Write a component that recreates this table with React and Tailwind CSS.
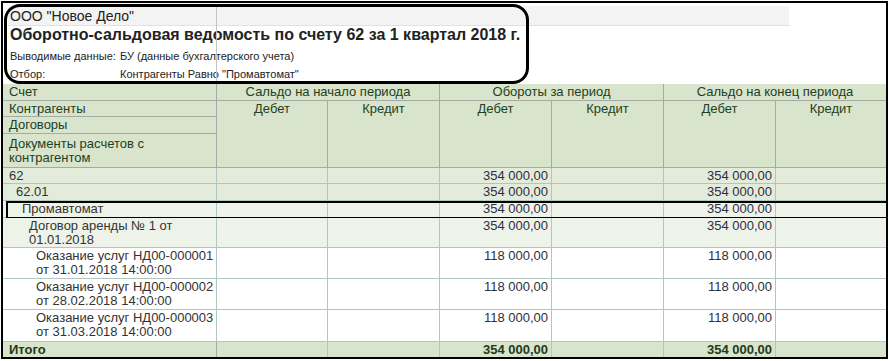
const COLS = "grid grid-cols-[214px_111px_112px_112px_112px_112px_111px]";

const rows = [
  { label: ["62"], pl: "pl-[6px]", bg: "bg-[#e3ecda]", h: "h-[16px]", turn: "354 000,00", end: "354 000,00" },
  { label: ["62.01"], pl: "pl-[13px]", bg: "bg-[#e3ecda]", h: "h-[17px]", turn: "354 000,00", end: "354 000,00" },
  { label: ["Промавтомат"], pl: "pl-[19px]", bg: "bg-[#eef3e9]", h: "h-[17px]", turn: "354 000,00", end: "354 000,00", marked: true },
  { label: ["Договор аренды № 1 от", "01.01.2018"], pl: "pl-[26px]", bg: "bg-[#eef3e9]", h: "h-[30px]", turn: "354 000,00", end: "354 000,00" },
  { label: ["Оказание услуг НД00-000001", "от 31.01.2018 14:00:00"], pl: "pl-[33px]", bg: "bg-white", h: "h-[31px]", turn: "118 000,00", end: "118 000,00" },
  { label: ["Оказание услуг НД00-000002", "от 28.02.2018 14:00:00"], pl: "pl-[33px]", bg: "bg-white", h: "h-[31px]", turn: "118 000,00", end: "118 000,00" },
  { label: ["Оказание услуг НД00-000003", "от 31.03.2018 14:00:00"], pl: "pl-[33px]", bg: "bg-white", h: "h-[32px]", turn: "118 000,00", end: "118 000,00" },
];

function HeadGroup({ title }) {
  return <div className="col-span-2 border-r border-b border-[#a4aaa4] text-center pt-px">{title}</div>;
}

function SubCell({ text }) {
  return <div className="row-span-3 border-r border-b border-[#a4aaa4] text-center pt-px">{text}</div>;
}

function NumCell({ value, bold }) {
  return (
    <div className={`border-r border-b border-[#b0c7bf] text-right pr-[3px] pt-px ${bold ? "font-bold text-[#1d3a1d]" : "text-[#2e2e3e]"}`}>
      {value}
    </div>
  );
}

export default function App() {
  return (
    <div className="w-[889px] h-[361px] bg-white font-['Liberation_Sans',Arial,sans-serif] text-[13px] leading-[14px] text-[#333]">
      <div className="ml-px mt-px w-[887px] h-[358px] border-2 border-black overflow-hidden">
        {/* report header */}
        <div className="relative h-[81px]">
          <div className="absolute left-[213px] top-[3px] bottom-0 w-px bg-[#c4c4c4]" />
          <div className="pt-[3px] pl-[5px]">
            <div className="w-[781px] h-[20px] bg-[#f3f3f3] border-b border-[#e2e2e2] pl-[2px] text-[14px] leading-[20px] text-[#222]">
              ООО "Новое Дело"
            </div>
          </div>
          <div className="h-[18px] pl-[7px] text-[16px] leading-[18px] font-bold text-[#222] whitespace-nowrap">
            Оборотно-сальдовая ведомость по счету 62 за 1 квартал 2018 г.
          </div>
          <div className="flex h-[23px] pt-[5px] pl-[7px] text-[11px] leading-[14px] text-[#222] whitespace-nowrap">
            <span className="w-[110px]">Выводимые данные:</span>
            <span>БУ (данные бухгалтерского учета)</span>
          </div>
          <div className="flex h-[14px] pl-[7px] text-[11px] leading-[14px] text-[#222] whitespace-nowrap">
            <span className="w-[110px]">Отбор:</span>
            <span>Контрагенты Равно "Промавтомат"</span>
          </div>
          <div className="absolute left-px top-px w-[525px] h-[80px] border-[3px] border-black rounded-[16px]" />
        </div>

        {/* table header */}
        <div className={`${COLS} grid-rows-[17px_16px_17px_34px] bg-[#d8e4cc] text-[#233f23]`}>
          <div className="border-r border-b border-[#a4aaa4] pl-[6px] pt-px">Счет</div>
          <HeadGroup title="Сальдо на начало периода" />
          <HeadGroup title="Обороты за период" />
          <HeadGroup title="Сальдо на конец периода" />
          <div className="border-r border-b border-[#a4aaa4] pl-[6px] pt-px">Контрагенты</div>
          <SubCell text="Дебет" />
          <SubCell text="Кредит" />
          <SubCell text="Дебет" />
          <SubCell text="Кредит" />
          <SubCell text="Дебет" />
          <SubCell text="Кредит" />
          <div className="border-r border-b border-[#a4aaa4] pl-[6px] pt-px">Договоры</div>
          <div className="border-r border-b border-[#a4aaa4] pl-[6px] pt-[3px]">
            Документы расчетов с<br />контрагентом
          </div>
        </div>

        {/* rows */}
        {rows.map((r, i) => (
          <div key={i} className={`relative ${COLS} ${r.h} ${r.bg}`}>
            <div className={`border-r border-b border-[#b0c7bf] ${r.pl} pt-px text-[#333]`}>
              {r.label.map((l, j) => (
                <div key={j}>{l}</div>
              ))}
            </div>
            <NumCell />
            <NumCell />
            <NumCell value={r.turn} />
            <NumCell />
            <NumCell value={r.end} />
            <NumCell />
            {r.marked && <div className="absolute left-[3px] -right-[3px] top-0 -bottom-px border-2 border-black" />}
          </div>
        ))}

        <div className={`${COLS} h-[17px] bg-[#d8e4cc]`}>
          <div className="border-r border-b border-[#a4aaa4] pl-[6px] pt-px font-bold text-[#1d3a1d]">Итого</div>
          <NumCell />
          <NumCell />
          <NumCell value="354 000,00" bold />
          <NumCell />
          <NumCell value="354 000,00" bold />
          <NumCell />
        </div>
      </div>
    </div>
  );
}
